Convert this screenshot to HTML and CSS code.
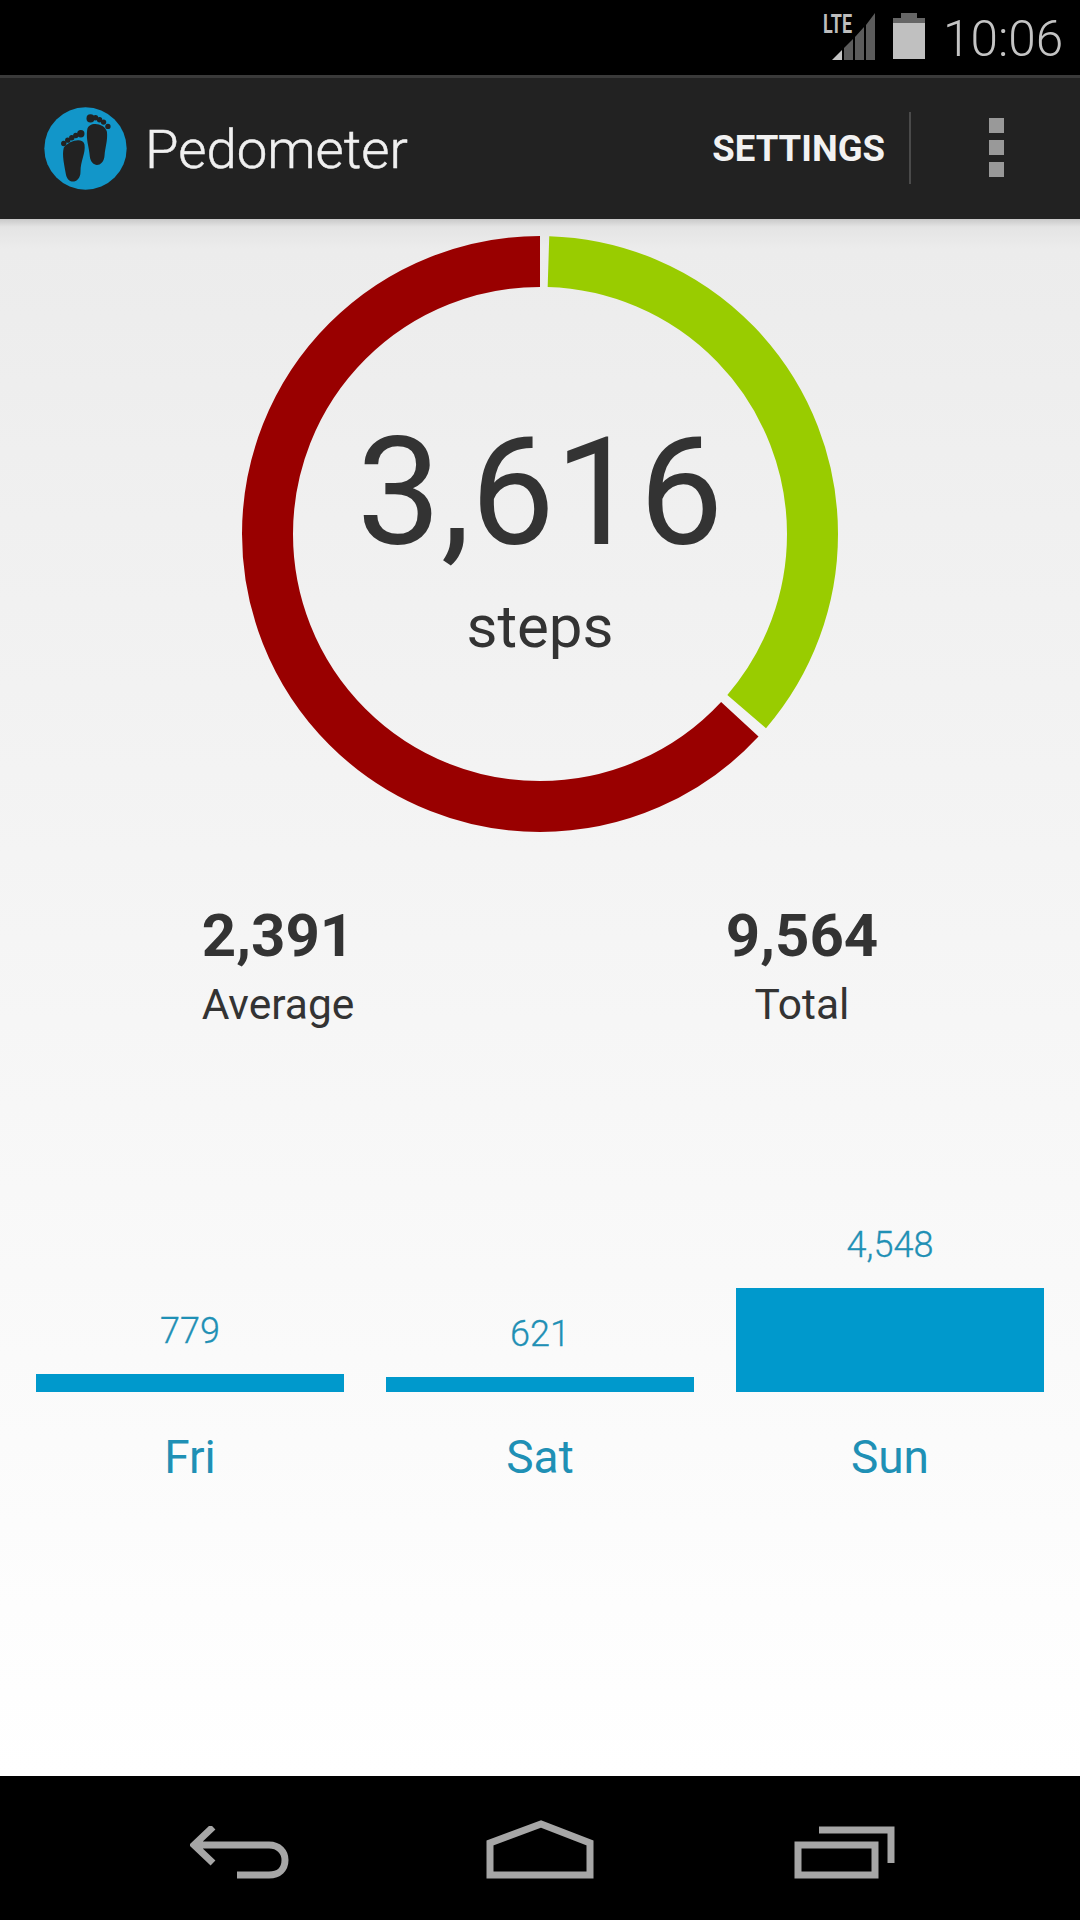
FILE: index.html
```
<!DOCTYPE html>
<html lang="en">
<head>
<meta charset="utf-8">
<title>Pedometer</title>
<link rel="stylesheet" href="styles.css">
</head>
<body>
<div class="phone">
  <header class="status">
    <span class="lte">LTE</span>
    <svg class="signal" width="44" height="48" viewBox="0 0 44 48">
      <path class="sig-on" d="M0 48 L10 38 V48Z"/>
      <path class="sig-off" d="M12 36 L21 27 V48 H12Z"/>
      <path class="sig-off" d="M23 25 L32 15 V48 H23Z"/>
      <path class="sig-off" d="M34 13 L43 1 V48 H34Z"/>
    </svg>
    <svg class="battery" width="32" height="46" viewBox="0 0 32 46">
      <path class="bat-empty" d="M8 0 H24 V5 H32 V10 H0 V5 H8Z"/>
      <rect class="bat-full" x="0" y="10" width="32" height="36"/>
    </svg>
    <span class="time">10:06</span>
  </header>
  <nav class="actionbar">
    <svg class="logo" width="87" height="87" viewBox="125 100 260 260">
      <circle class="logo-disc" cx="255" cy="230" r="123"/>
      <g class="logo-foot">
        <path d="M190 228 C205 206 247 196 252 218 C256 245 240 265 240 300 C240 332 205 340 197 310 C192 280 184 250 190 228Z"/>
        <circle cx="190" cy="215" r="8"/><circle cx="202" cy="205" r="8"/><circle cx="214" cy="198" r="8"/><circle cx="226" cy="191" r="8"/><circle cx="241" cy="186" r="11"/>
        <path d="M260 175 C263 148 312 153 319 180 C322 205 314 225 312 250 C310 286 273 290 268 255 C266 225 256 205 260 175Z"/>
        <circle cx="270" cy="140" r="12"/><circle cx="285" cy="138" r="8"/><circle cx="297" cy="144" r="8"/><circle cx="309" cy="151" r="8"/><circle cx="322" cy="164" r="8"/>
      </g>
    </svg>
    <h1 class="title">Pedometer</h1>
    <span class="settings">SETTINGS</span>
    <span class="divider"></span>
    <span class="overflow"><i></i><i></i><i></i></span>
  </nav>
  <main class="content">
    <section class="ring">
      <svg class="ring-svg" width="596" height="596" viewBox="0 0 596 596">
        <circle class="arc-red" cx="298" cy="298" r="272.5" pathLength="100" stroke-dasharray="63.1 36.9" stroke-dashoffset="-36.9"/>
        <circle class="arc-green" cx="298" cy="298" r="272.5" pathLength="100" stroke-dasharray="35.8 64.2" stroke-dashoffset="-0.5"/>
      </svg>
      <div class="ring-label">
        <div class="ring-value">3,616</div>
        <div class="ring-unit">steps</div>
      </div>
    </section>
    <section class="stats">
      <div class="stat"><div class="stat-value">2,391</div><div class="stat-label">Average</div></div>
      <div class="stat"><div class="stat-value">9,564</div><div class="stat-label">Total</div></div>
    </section>
    <section class="chart">
      <div class="day">
        <div class="day-value">779</div>
        <div class="bar bar-fri"></div>
        <div class="day-name">Fri</div>
      </div>
      <div class="day">
        <div class="day-value">621</div>
        <div class="bar bar-sat"></div>
        <div class="day-name">Sat</div>
      </div>
      <div class="day">
        <div class="day-value">4,548</div>
        <div class="bar bar-sun"></div>
        <div class="day-name">Sun</div>
      </div>
    </section>
  </main>
  <footer class="navbar">
    <svg class="nav-icon" width="102" height="54" viewBox="189 1826 102 54">
      <path d="M212 1827 L193 1845 L212 1863 M193 1845 H268 C278 1845 284 1852 284 1860 C284 1869 278 1875 268 1875 H236"/>
    </svg>
    <svg class="nav-icon" width="110" height="60" viewBox="486 1820 110 60">
      <path d="M490 1875 V1843 L541 1824 L590 1843 V1875Z"/>
    </svg>
    <svg class="nav-icon" width="106" height="54" viewBox="793 1826 106 54">
      <path d="M798 1845 H875 V1875 H798Z M819 1830 H891 V1863"/>
    </svg>
  </footer>
</div>
</body>
</html>
```
FILE: styles.css
```
* { box-sizing: border-box; }
html, body { margin: 0; padding: 0; }
body { width: 1080px; height: 1920px; overflow: hidden; font-family: Roboto, "Liberation Sans", sans-serif; }
.phone { width: 1080px; height: 1920px; display: flex; flex-direction: column; background: #000; }

.status { height: 78px; flex: none; display: flex; align-items: flex-start; background: #000; border-bottom: 3px solid #3a3a3a; padding-left: 823px; position: relative; }
.lte { position: absolute; left: 823px; top: 12px; font-size: 25px; line-height: 26px; font-weight: 700; color: #bdbdbd; transform: scaleX(.72); transform-origin: left top; }
.signal { margin: 12px 0 0 9px; flex: none; }
.sig-on { fill: #c4c4c4; }
.sig-off { fill: #5c5c5c; }
.battery { margin: 13px 0 0 17px; flex: none; }
.bat-empty { fill: #666; }
.bat-full { fill: #c0c0c0; }
.time { margin: 11px 0 0 18px; font-size: 49.5px; line-height: 56px; font-weight: 300; color: #c4c4c4; }

.actionbar { height: 141px; flex: none; display: flex; align-items: center; background: #222; padding-left: 42px; }
.logo { flex: none; }
.title { margin: 0 0 0 16px; font-size: 54.5px; font-weight: 300; -webkit-text-stroke: 0.5px #f0f0f0; color: #f0f0f0; flex: 1; }
.settings { font-size: 36.5px; font-weight: 700; color: #f2f2f2; }
.divider { width: 2px; height: 72px; background: #4a4a4a; margin: -2px 78px 0 24px; }
.overflow { display: flex; flex-direction: column; gap: 7px; margin: -2px 76px 0 0; }
.overflow i { display: block; width: 15px; height: 15px; background: #999; }

.content { flex: 1; display: flex; flex-direction: column; align-items: stretch; background: linear-gradient(#c9c9c9 0, #e4e4e4 8px, #ececec 30px, #f0f0f0 300px, #fff 1557px); }

.ring { position: relative; width: 596px; height: 596px; margin: 17px auto 0; }
.ring-svg { display: block; }
.arc-red, .arc-green { fill: none; stroke-width: 51; transform: rotate(-90deg); transform-origin: 298px 298px; }
.arc-red { stroke: #990000; }
.arc-green { stroke: #99cc00; }
.ring-label { position: absolute; left: 0; right: 0; top: 180px; text-align: center; color: #333; }
.ring-value { font-size: 150px; line-height: 155px; font-weight: 400; }
.ring-unit { font-size: 60px; line-height: 70px; font-weight: 400; margin-top: 21px; }

.stats { display: grid; grid-template-columns: 524px 524px; justify-content: center; margin-top: 72px; text-align: center; color: #333; }
.stat-value { font-size: 60px; line-height: 64px; font-weight: 700; }
.stat-label { font-size: 42.5px; line-height: 50px; font-weight: 400; margin-top: 12px; }

.chart { display: grid; grid-template-columns: repeat(3, 308px); column-gap: 42px; padding: 0 36px; margin-top: 193px; align-items: end; text-align: center; color: #1f90b5; }
.day-value { font-size: 36px; line-height: 44px; font-weight: 300; -webkit-text-stroke: 0.3px #1f90b5; margin-bottom: 21px; }
.bar { background: #0099cc; }
.bar-fri { height: 18px; }
.bar-sat { height: 15px; }
.bar-sun { height: 104px; }
.day-name { font-size: 46px; line-height: 56px; margin-top: 37px; }

.navbar { height: 144px; flex: none; background: #000; display: flex; align-items: flex-start; padding: 50px 0 0 190px; }
.nav-icon { display: block; flex: none; }
.nav-icon:nth-child(1) { margin-top: 0; }
.nav-icon:nth-child(2) { margin: -6px 0 0 194px; }
.nav-icon:nth-child(3) { margin-left: 197px; }
.nav-icon path { fill: none; stroke: #a6a6a6; stroke-width: 7; }
.logo-disc { fill: #1296c9; }
.logo-foot { fill: #222; }
```
